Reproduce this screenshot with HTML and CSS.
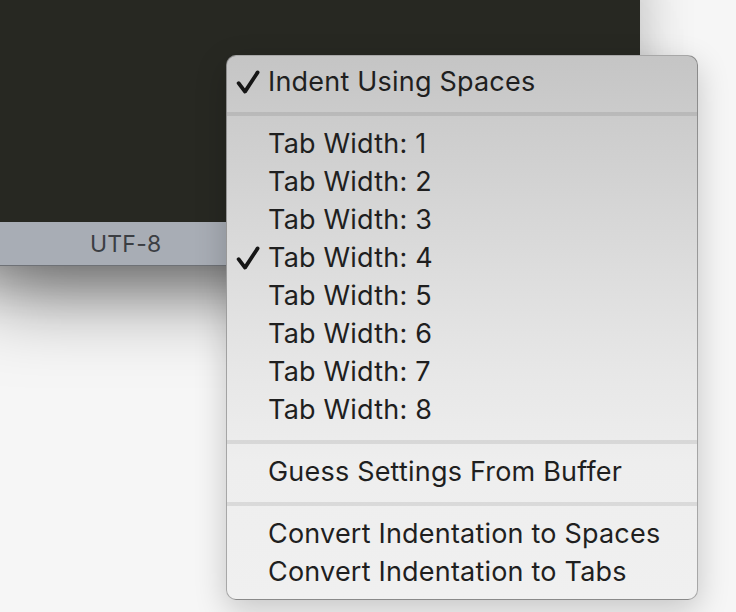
FILE: index.html
```html
<!DOCTYPE html>
<html>
<head>
<meta charset="utf-8">
<link rel="stylesheet" href="styles.css">
</head>
<body>
<div class="screen">
  <div class="window">
    <div class="editor"></div>
    <div class="statusbar"><span class="status-item">UTF-8</span></div>
  </div>

  <div class="menu">
    <div class="item">
      <svg class="check" viewBox="0 0 24 24"><path d="M2.6 13.2 L9 21.6 L21.6 2.4"/></svg>
      <span class="label">Indent Using Spaces</span>
    </div>
    <div class="sep"></div>
    <div class="item"><span class="check"></span><span class="label">Tab Width: 1</span></div>
    <div class="item"><span class="check"></span><span class="label">Tab Width: 2</span></div>
    <div class="item"><span class="check"></span><span class="label">Tab Width: 3</span></div>
    <div class="item">
      <svg class="check" viewBox="0 0 24 24"><path d="M2.6 13.2 L9 21.6 L21.6 2.4"/></svg>
      <span class="label">Tab Width: 4</span>
    </div>
    <div class="item"><span class="check"></span><span class="label">Tab Width: 5</span></div>
    <div class="item"><span class="check"></span><span class="label">Tab Width: 6</span></div>
    <div class="item"><span class="check"></span><span class="label">Tab Width: 7</span></div>
    <div class="item"><span class="check"></span><span class="label">Tab Width: 8</span></div>
    <div class="sep"></div>
    <div class="item"><span class="check"></span><span class="label">Guess Settings From Buffer</span></div>
    <div class="sep"></div>
    <div class="item"><span class="check"></span><span class="label">Convert Indentation to Spaces</span></div>
    <div class="item"><span class="check"></span><span class="label">Convert Indentation to Tabs</span></div>
  </div>
</div>
</body>
</html>
```

FILE: styles.css
```css
html, body {
  margin: 0;
  padding: 0;
}

body {
  width: 736px;
  height: 612px;
  overflow: hidden;
  background: #f6f6f6;
  font-family: Inter, "Liberation Sans", Arial, sans-serif;
}

.screen {
  position: relative;
  width: 736px;
  height: 612px;
  overflow: hidden;
}

.window {
  width: 700px;
  height: 326px;
  margin: -60px 0 0 -60px;
  display: flex;
  flex-direction: column;
  box-shadow: 0 71px 80px -44px rgba(0, 0, 0, 0.5), 0 10px 50px rgba(0, 0, 0, 0.24);
}

.editor {
  flex: 1;
  background: #272822;
}

.statusbar {
  height: 43px;
  background: #a8adb5;
  border-bottom: 1px solid #6e7176;
  display: flex;
  align-items: center;
  padding-left: 150px;
}

.status-item {
  font-size: 23px;
  color: #3b3e43;
  letter-spacing: 0.2px;
}

.menu {
  position: absolute;
  left: 226px;
  top: 55px;
  width: 470px;
  padding: 7px 0 8px;
  border: 1px solid rgba(0, 0, 0, 0.3);
  border-radius: 10px;
  background: linear-gradient(180deg, #c5c5c5 0%, #d2d2d2 22%, #dddddd 40%, #e7e7e7 58%, #eeeeee 75%, #f0f0f0 100%);
  box-shadow: 0 10px 32px rgba(0, 0, 0, 0.2);
}

.item {
  height: 38px;
  display: flex;
  align-items: center;
  padding-left: 9px;
  gap: 8px;
  font-size: 27px;
  letter-spacing: 0.2px;
  color: #1f1f1f;
  white-space: nowrap;
}

.check {
  width: 24px;
  height: 24px;
  flex: none;
}

svg.check path {
  fill: none;
  stroke: #161616;
  stroke-width: 3.8;
  stroke-linejoin: round;
  stroke-linecap: round;
}

.label {
  line-height: 38px;
}

.sep {
  height: 4px;
  margin: 11px 0 9px;
  background: rgba(0, 0, 0, 0.085);
}
```
